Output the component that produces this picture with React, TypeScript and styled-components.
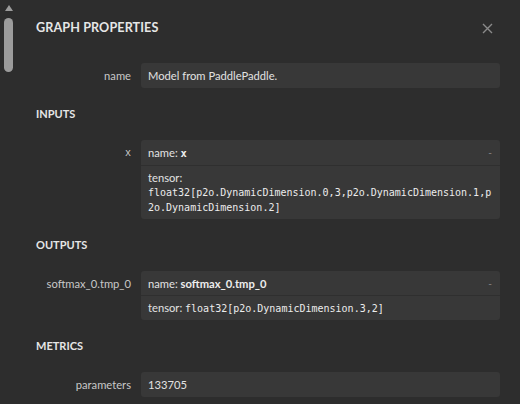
import styled, { createGlobalStyle } from "styled-components";

const GlobalStyle = createGlobalStyle`
  html, body {
    margin: 0;
    padding: 0;
    background: #2d2d2d;
  }
  body {
    font-family: Lato, "Open Sans", "Noto Sans", sans-serif;
    font-size: 11.2px;
    color: #e2e2e2;
  }
`;

const Sidebar = styled.div`
  position: relative;
  width: 520px;
  height: 404px;
  overflow: hidden;
  background: #2d2d2d;
  box-sizing: border-box;
  padding: 0 20px 0 36px;
`;

const ScrollTrack = styled.div`
  position: absolute;
  left: 4px;
  top: 5px;
  width: 9px;
  display: flex;
  flex-direction: column;
  align-items: center;
  gap: 7px;
`;

const ScrollArrow = styled.div`
  width: 0;
  height: 0;
  border-left: 4px solid transparent;
  border-right: 4px solid transparent;
  border-bottom: 6px solid #9c9c9c;
`;

const ScrollThumb = styled.div`
  width: 9px;
  height: 54px;
  border-radius: 5px;
  background: #9c9c9c;
`;

const TitleBar = styled.div`
  display: flex;
  align-items: center;
  justify-content: space-between;
  margin-top: 18px;
  height: 20px;
  margin-bottom: 25px;
`;

const Title = styled.h1`
  margin: 0;
  font-size: 12.6px;
  font-weight: 700;
  line-height: 20px;
  color: #e6e6e6;
  letter-spacing: 0.1px;
`;

const CloseButton = styled.button`
  display: flex;
  padding: 0;
  margin-right: 7px;
  border: 0;
  background: none;
  cursor: pointer;
`;

const SectionHeader = styled.div`
  padding: 18px 0;
  font-size: 11px;
  font-weight: 700;
  line-height: 16px;
  color: #e6e6e6;
`;

const Row = styled.div`
  display: grid;
  grid-template-columns: 95px 1fr;
  column-gap: 10px;
  align-items: start;
`;

const Label = styled.div<{ $mono?: boolean }>`
  text-align: right;
  padding-top: 5px;
  line-height: 15px;
  color: #c8c8c8;
  font-family: ${(p) => (p.$mono ? '"DejaVu Sans Mono", monospace' : "inherit")};
  font-size: ${(p) => (p.$mono ? "10px" : "inherit")};
`;

const Box = styled.div`
  background: #383838;
  border-radius: 3px;
  overflow: hidden;
`;

const Value = styled.div`
  padding: 5px 7px;
  line-height: 15px;
`;

const BoxHeader = styled.div`
  display: flex;
  justify-content: space-between;
  padding: 5px 8px 4px 7px;
  line-height: 15px;
  border-bottom: 1px solid #2f2f2f;
`;

const Expander = styled.span`
  color: #8c8c8c;
  font-size: 10px;
`;

const Strong = styled.b<{ $mono?: boolean }>`
  font-weight: 700;
  color: #ededed;
  font-family: ${(p) => (p.$mono ? '"DejaVu Sans Mono", monospace' : "inherit")};
  font-size: ${(p) => (p.$mono ? "10.5px" : "inherit")};
`;

const BoxBody = styled.div`
  padding: 4px 5px 4px 7px;
  line-height: 15px;
`;

const Code = styled.code`
  display: inline-block;
  font-family: "DejaVu Sans Mono", monospace;
  font-size: 10px;
  line-height: 15px;
  color: #ececec;
  word-break: break-all;
`;

interface Arg {
  label: string;
  name: string;
  type: string;
  monoLabel?: boolean;
}

const ArgumentRow = ({ arg }: { arg: Arg }) => (
  <Row>
    <Label $mono={arg.monoLabel}>{arg.label}</Label>
    <Box>
      <BoxHeader>
        <span>
          name: <Strong $mono={arg.monoLabel}>{arg.name}</Strong>
        </span>
        <Expander>-</Expander>
      </BoxHeader>
      <BoxBody>
        tensor: <Code>{arg.type}</Code>
      </BoxBody>
    </Box>
  </Row>
);

const inputs: Arg[] = [
  {
    label: "x",
    name: "x",
    type: "float32[p2o.DynamicDimension.0,3,p2o.DynamicDimension.1,p2o.DynamicDimension.2]",
    monoLabel: true,
  },
];

const outputs: Arg[] = [
  {
    label: "softmax_0.tmp_0",
    name: "softmax_0.tmp_0",
    type: "float32[p2o.DynamicDimension.3,2]",
  },
];

export default function App() {
  return (
    <>
      <GlobalStyle />
      <Sidebar>
        <ScrollTrack>
          <ScrollArrow />
          <ScrollThumb />
        </ScrollTrack>
        <TitleBar>
          <Title>GRAPH PROPERTIES</Title>
          <CloseButton aria-label="Close">
            <svg width="11" height="11" viewBox="0 0 11 11">
              <path d="M1 1 L10 10 M10 1 L1 10" stroke="#8a8a8a" strokeWidth="1.4" />
            </svg>
          </CloseButton>
        </TitleBar>
        <Row>
          <Label>name</Label>
          <Box>
            <Value>Model from PaddlePaddle.</Value>
          </Box>
        </Row>
        <SectionHeader>INPUTS</SectionHeader>
        {inputs.map((a) => (
          <ArgumentRow key={a.label} arg={a} />
        ))}
        <SectionHeader>OUTPUTS</SectionHeader>
        {outputs.map((a) => (
          <ArgumentRow key={a.label} arg={a} />
        ))}
        <SectionHeader>METRICS</SectionHeader>
        <Row>
          <Label>parameters</Label>
          <Box>
            <Value>133705</Value>
          </Box>
        </Row>
      </Sidebar>
    </>
  );
}
